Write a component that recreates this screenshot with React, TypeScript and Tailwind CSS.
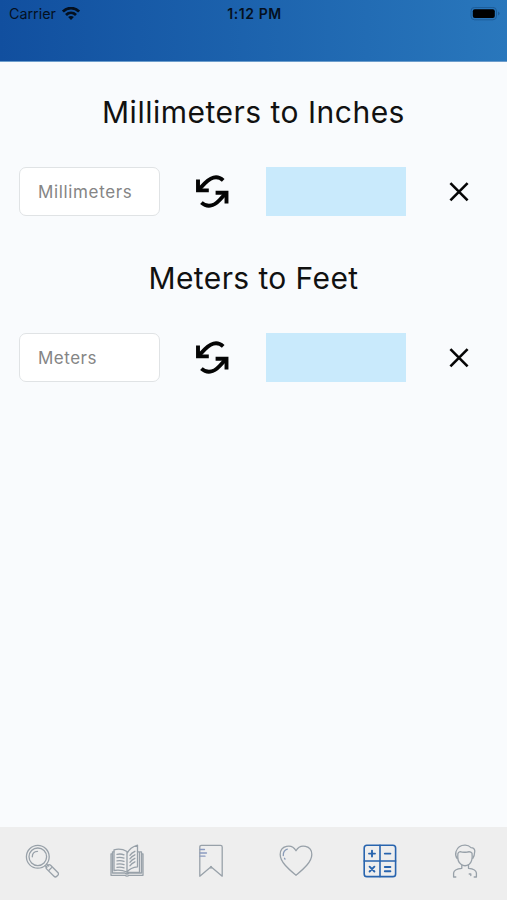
import React from 'react';

const ConvertIcon = () => (
  <svg className="w-9 h-9" viewBox="0 0 36 36" fill="none" stroke="#050505" strokeWidth="3.9">
    <path d="M4 5.6V16.4H14.8" />
    <path d="M5 15.4L11 9.2C17 3.2 23.5 1.2 29.2 6.4" />
    <path d="M32.5 29.6V18.7H21.6" />
    <path d="M31.5 19.7L25.6 26C19.5 32.6 13 33.6 7.4 28.6" />
  </svg>
);

const ClearIcon = () => (
  <svg className="w-5 h-5" viewBox="0 0 20 20" fill="none" stroke="#050505" strokeWidth="2.6">
    <path d="M1.4 1.1L18.6 18.3M18.6 1.1L1.4 18.3" />
  </svg>
);

const WifiIcon = () => (
  <svg className="w-[18px] h-[14px]" viewBox="0 0 18 14" fill="none" stroke="#04101f" strokeWidth="2.8">
    <path d="M.9 4.6C5.5 0 12.5 0 17.1 4.6" />
    <path d="M4 7.9C6.9 5.2 11.1 5.2 14 7.9" />
    <path d="M6.1 10.1C7.9 8.7 10.1 8.7 11.9 10.1L9 13Z" fill="#04101f" stroke="none" />
  </svg>
);

const BatteryIcon = () => (
  <svg className="w-[30px] h-[14px]" viewBox="0 0 30 14">
    <rect x="1" y=".4" width="25.5" height="12.4" rx="3.6" fill="none" stroke="#1d5c97" strokeWidth="1" />
    <rect x="2.8" y="2.2" width="22" height="8.8" rx="2" fill="#000" />
    <path d="M28 4.6v4q1.6-.6 1.6-2T28 4.6z" fill="#1d5c97" />
  </svg>
);

const SearchIcon = () => (
  <>
    <circle cx="12.8" cy="12.8" r="11.4" />
    <circle cx="12.8" cy="12.8" r="8.8" />
    <path d="M7.3 12.8C7.3 9.5 9.3 7.4 12.5 7.3" />
    <path d="M20.2 21.6l1.7 2M21.6 20.2l2.1 1.8" />
    <rect x="20.2" y="24.1" width="14.2" height="5.4" rx="2" transform="rotate(45 27.3 26.8)" />
    <path d="M24 26.2l2.6-2.6" />
  </>
);

const BookIcon = () => (
  <>
    <path d="M4 5.8Q11 4 17 7.5V28Q11 25.5 4 26.5zM17 28V9.5Q20 3.5 27.5 1.2V22.8Q20.5 23.5 17 28" />
    <path d="M4 7.8H2.5V29H15q2 2 4 0h12.5V7.8H27.5M2.5 9.8H1v21.5h14q2 1.6 4 0h14V9.8h-1.5M29.5 8v20.5H17" />
    <path d="M7 10.3q3.7-.8 7 .5M7 13.6q3.7-.8 7 .5M7 16.9q3.7-.8 7 .5M7 20.2q3.7-.8 7 .5M7 23.4q3.7-.8 7 .5M19.9 11.3q1.7-2.5 5-4M19.9 14.8q1.7-2.5 5-4M19.9 18.3q1.7-2.5 5-4M19.9 21.8q1.7-2.5 5-4" />
  </>
);

const BookmarkIcon = () => (
  <>
    <path d="M5.8 32.2V3Q5.8 1.3 7.5 1.3H26.5Q28.2 1.3 28.2 3V32.2L17 22.8Z" />
    <path d="M17 22.3v2" />
    <path d="M6 5.5h4.5M6 9h6.5M6 12.2h5" stroke="#8a9ac0" />
  </>
);

const HeartIcon = () => (
  <>
    <path d="M17 31.3C11 26.2 1.2 18.5 1.2 10.4 1.2 1.5 12.7-.8 17 6.7 21.3-.8 32.8 1.5 32.8 10.4 32.8 18.5 23 26.2 17 31.3Z" />
    <path d="M4.3 11.5C4.2 8.5 5.5 6 8.3 5.2M5.5 14.2l.5.9" stroke="#899bb8" />
  </>
);

const CalculatorIcon = () => (
  <>
    <rect x="1.2" y="1.2" width="31.4" height="31.4" rx="2.7" />
    <path d="M17 1.2V32.6M1.2 17H32.6" />
    <path d="M9 6.6v6M6 9.6h6M21.8 9.6h5.6M6.6 22.7l4.8 4.8M11.4 22.7l-4.8 4.8M21.8 23h5.6M21.8 27.2h5.6" strokeWidth="1.9" />
  </>
);

const ProfileIcon = () => (
  <>
    <path d="M9.2 14.6Q6.9 11.7 8 7.6 10.3 1.1 17 1.2 20.5 1.1 23 3.6 26.5 3.8 26.8 7 26.5 12 24.8 14.4" />
    <path d="M9.9 9.7Q9 17.5 13 20.3 17 23.2 21.2 20.2 25 17 24 9.1 22.5 7.2 19.5 8 15 8.6 12.2 7.7 10.2 8.3 9.9 9.7" />
    <path d="M13.8 21.3v3Q6 25 5.6 29v4M20.5 21.3v3Q28 25 28.4 29v4M5.6 33h2.2M26.2 33h2.2M21.2 30h1.6v1.6" />
  </>
);

const tabs = [
  { name: 'Search', Icon: SearchIcon },
  { name: 'Guide', Icon: BookIcon },
  { name: 'Bookmarks', Icon: BookmarkIcon },
  { name: 'Favorites', Icon: HeartIcon },
  { name: 'Calculator', Icon: CalculatorIcon },
  { name: 'Profile', Icon: ProfileIcon },
];

type ConverterProps = {
  title: string;
  placeholder: string;
  titleClass: string;
  inputClass: string;
};

const Converter = ({ title, placeholder, titleClass, inputClass }: ConverterProps) => (
  <section className="h-[166px]">
    <div className="h-[105px] pt-8 text-center">
      <h2 className={`text-[30px] leading-9 font-normal text-[#111] whitespace-nowrap ${titleClass}`}>{title}</h2>
    </div>
    <div className="flex items-center h-[49px] pl-[19px]">
      <input
        aria-label={placeholder}
        placeholder={placeholder}
        className={`w-[141px] h-[49px] rounded-[7px] border border-[#e0e3e5] bg-white px-[18px] text-[17px] text-black outline-none placeholder:text-[#858585] ${inputClass}`}
      />
      <button className="ml-[34px]" aria-label="Convert"><ConvertIcon /></button>
      <output className="ml-9 w-[140px] h-[49px] bg-[#c9eafc]" />
      <button className="ml-[43px]" aria-label="Clear"><ClearIcon /></button>
    </div>
  </section>
);

const App = () => {
  return (
    <div className="flex flex-col w-[507px] h-[900px] bg-[#f9fbfd] overflow-hidden font-['Inter',sans-serif]">
      <header className="h-[62px] shrink-0 bg-gradient-to-r from-[#114f9f] to-[#2977bc] border-b border-[#6c9dcc]">
        <div className="grid grid-cols-3 items-center h-[27px] pl-[9px] pr-[7px] text-[#04101f]">
          <div className="flex items-center gap-[6px] text-[14.3px]">
            <span>Carrier</span>
            <WifiIcon />
          </div>
          <span className="text-center text-[14px] font-semibold tracking-[0.6px]">1:12 PM</span>
          <div className="flex justify-end"><BatteryIcon /></div>
        </div>
      </header>

      <main className="flex-1">
        <Converter title="Millimeters to Inches" placeholder="Millimeters" titleClass="tracking-[0.5px]" inputClass="tracking-[0.65px]" />
        <Converter title="Meters to Feet" placeholder="Meters" titleClass="tracking-[0.4px]" inputClass="tracking-[0.5px]" />
      </main>

      {/* Bottom tabs */}
      <nav className="grid grid-cols-6 h-[73px] shrink-0 bg-[#eee]">
        {tabs.map(({ name, Icon }) => (
          <button key={name} aria-label={name} className={`flex justify-center pt-[17px] ${name === 'Calculator' ? 'text-[#2864ae]' : 'text-[#98a1a9]'}`}>
            <svg
              className="w-[34px] h-[34px]"
              viewBox="0 0 34 34"
              fill="none"
              stroke="currentColor"
              strokeWidth={name === 'Calculator' ? 1.6 : 1.3}
              strokeLinecap="round"
              strokeLinejoin="round"
            >
              <Icon />
            </svg>
          </button>
        ))}
      </nav>
    </div>
  );
};

export default App;
